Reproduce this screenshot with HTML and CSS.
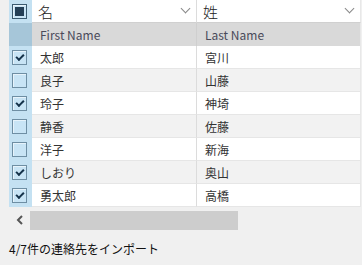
FILE: index.html
```html
<!DOCTYPE html>
<html lang="ja">
<head>
    <meta charset="UTF-8">
    <title>連絡先のインポート</title>
    <link rel="stylesheet" href="styles.css">
</head>
<body>
    <div class="grid">
        <!-- column header row -->
        <div class="cell check-col head">
            <span class="box partial"><span class="dot"></span></span>
        </div>
        <div class="cell head map">名<span class="chev"></span></div>
        <div class="cell head map last">姓<span class="chev"></span></div>

        <!-- source field names -->
        <div class="cell check-col sub"></div>
        <div class="cell sub">First Name</div>
        <div class="cell sub last">Last Name</div>
    </div>

    <div class="grid rows" id="rows"></div>

    <div class="hscroll">
        <span class="arrow">
            <svg width="8" height="10" viewBox="0 0 8 10"><polyline points="6,1 2,5 6,9" fill="none" stroke="#555" stroke-width="2"/></svg>
        </span>
        <div class="track"><div class="thumb"></div></div>
    </div>

    <div class="status"><span class="count">4/7</span>件の連絡先をインポート</div>

    <script>
        const contacts = [
            { first: '太郎', last: '宮川', checked: true },
            { first: '良子', last: '山藤', checked: false },
            { first: '玲子', last: '神埼', checked: true },
            { first: '静香', last: '佐藤', checked: false },
            { first: '洋子', last: '新海', checked: false },
            { first: 'しおり', last: '奥山', checked: true },
            { first: '勇太郎', last: '高橋', checked: true }
        ];

        const rows = document.getElementById('rows');
        contacts.forEach((c, i) => {
            const alt = i % 2 === 1 ? ' alt' : '';
            rows.insertAdjacentHTML('beforeend',
                '<div class="cell check-col"><span class="box' + (c.checked ? ' on' : '') + '"></span></div>' +
                '<div class="cell data' + alt + '">' + c.first + '</div>' +
                '<div class="cell data last' + alt + '">' + c.last + '</div>');
        });
    </script>
</body>
</html>
```

FILE: styles.css
```css
:root {
    --bg: #f0f0f0;
    --check-col: #c4e1f2;
    --check-sub: #a6c6d9;
    --line: #dcdcdc;
    --text: #333333;
}

body {
    margin: 0;
    padding: 0 0 0 9px;
    background-color: var(--bg);
    font-family: "Noto Sans CJK JP", "Noto Sans", sans-serif;
    color: var(--text);
    font-size: 12px;
}

.grid {
    display: grid;
    grid-template-columns: 23px 165px 164px;
    width: 352px;
}

.cell {
    height: 23px;
    box-sizing: border-box;
    display: flex;
    align-items: center;
    padding-left: 8px;
    background-color: #ffffff;
    border-right: 1px solid var(--line);
    border-bottom: 1px solid #e6e6e6;
}

.cell.last {
    border-right: 1px solid #e8e8e8;
}

.check-col {
    padding-left: 3px;
    background-color: var(--check-col);
    border-right: none;
    border-bottom: none;
}

.head {
    font-size: 15px;
    font-weight: 300;
    color: #222;
    padding-left: 6px;
    border-bottom: 1px solid #d0d0d0;
}

.head.check-col {
    padding-left: 3px;
    border-bottom: none;
}

.map {
    justify-content: space-between;
    padding-right: 7px;
}

.chev {
    width: 6px;
    height: 6px;
    border-right: 1px solid #888;
    border-bottom: 1px solid #888;
    transform: rotate(45deg);
    margin-top: -5px;
}

.sub {
    background-color: #d9d9d9;
    color: #4a4a5a;
    border-bottom: none;
    border-right: 1px solid #cfcfcf;
}

.sub.check-col {
    background-color: var(--check-sub);
    border-right: none;
}

.data.alt {
    background-color: #f2f2f2;
}

.box {
    width: 15px;
    height: 15px;
    box-sizing: border-box;
    border: 1px solid #6e8ea3;
    background-color: #c8e4f5;
    box-shadow: inset 1px 1px 0 #e6f3fb;
    display: flex;
    align-items: center;
    justify-content: center;
}

.box.on::after {
    content: "";
    width: 6px;
    height: 3px;
    border-left: 2px solid #15324a;
    border-bottom: 2px solid #15324a;
    transform: rotate(-45deg);
    margin-top: -2px;
}

.box.partial {
    border: 1px solid #3a5a70;
}

.box .dot {
    width: 9px;
    height: 9px;
    background-color: #243f56;
}

.hscroll {
    display: flex;
    align-items: center;
    width: 352px;
    height: 22px;
    margin-top: 2px;
}

.arrow {
    width: 21px;
    display: flex;
    justify-content: center;
}

.track {
    flex: 1;
    height: 19px;
}

.thumb {
    width: 208px;
    height: 100%;
    background-color: #cdcdcd;
}

.status {
    margin-top: 9px;
    font-size: 12px;
    color: #111;
}
```
